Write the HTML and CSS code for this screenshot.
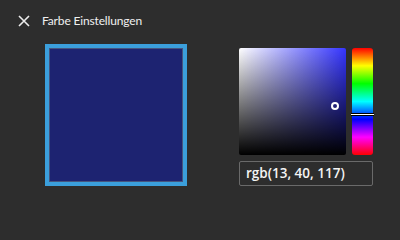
FILE: index.html
```html
<!DOCTYPE html>
<html>
<head>
<meta charset="utf-8">
<link rel="stylesheet" href="styles.css">
</head>
<body>
<div class="app">
  <div class="header">
    <svg class="close" width="12" height="12" viewBox="0 0 12 12">
      <path d="M1 1 L11 11 M11 1 L1 11" stroke="#ececec" stroke-width="1.6" fill="none"/>
    </svg>
    <span class="title">Farbe Einstellungen</span>
  </div>
  <div class="main">
    <div class="swatch"></div>
    <div class="picker">
      <div class="pick-row">
        <div class="sv">
          <div class="sv-handle"></div>
        </div>
        <div class="hue">
          <div class="hue-handle"></div>
        </div>
      </div>
      <div class="input">rgb(13, 40, 117)</div>
    </div>
  </div>
</div>
</body>
</html>
```
FILE: styles.css
```css
html, body {
  margin: 0;
  padding: 0;
  background: #2d2d2d;
}
.app {
  width: 400px;
  height: 210px;
  font-family: "Noto Sans", "Open Sans", sans-serif;
  color: #ececec;
}
.header {
  display: flex;
  align-items: center;
  gap: 12px;
  height: 20px;
  padding: 11px 0 0 18px;
}
.close {
  display: block;
}
.title {
  font-family: Lato, "Noto Sans", sans-serif;
  font-size: 12px;
  letter-spacing: -0.15px;
  line-height: 20px;
  color: #f0f0f0;
}
.main {
  display: flex;
  padding: 13px 0 0 45px;
  gap: 52px;
}
.swatch {
  box-sizing: border-box;
  width: 142px;
  height: 142px;
  border: 4px solid #3b9fdc;
  background: #1d2371;
  box-shadow: inset 0 0 0 1px #46557f;
}
.picker {
  margin-top: 4px;
  display: flex;
  flex-direction: column;
  gap: 6px;
  width: 134px;
}
.pick-row {
  display: flex;
  gap: 6px;
}
.sv {
  position: relative;
  width: 107px;
  height: 107px;
  border-radius: 2px;
  background: linear-gradient(to top, #000, rgba(0,0,0,0)),
              linear-gradient(to right, #fff, rgb(52, 52, 255));
}
.sv-handle {
  position: absolute;
  left: 92px;
  top: 54px;
  width: 4px;
  height: 4px;
  border: 2px solid #fff;
  border-radius: 50%;
}
.hue {
  position: relative;
  width: 21px;
  height: 107px;
  border-radius: 3px;
  background: linear-gradient(to bottom, #f00, #ff0 16.6%, #0f0 33.3%, #0ff 50%, #00f 66.6%, #f0f 83.3%, #f00);
}
.hue-handle {
  position: absolute;
  left: -1px;
  right: -1px;
  top: 65px;
  height: 1px;
  background: #fff;
  border-top: 1px solid #000;
  border-bottom: 1px solid #000;
}
.input {
  box-sizing: border-box;
  height: 25px;
  border: 1px solid #6a6a6a;
  border-radius: 2px;
  padding-left: 6px;
  font-family: "Open Sans", "Noto Sans", sans-serif;
  font-size: 13.5px;
  font-weight: 600;
  line-height: 23px;
  color: #f4f4f4;
}
```
